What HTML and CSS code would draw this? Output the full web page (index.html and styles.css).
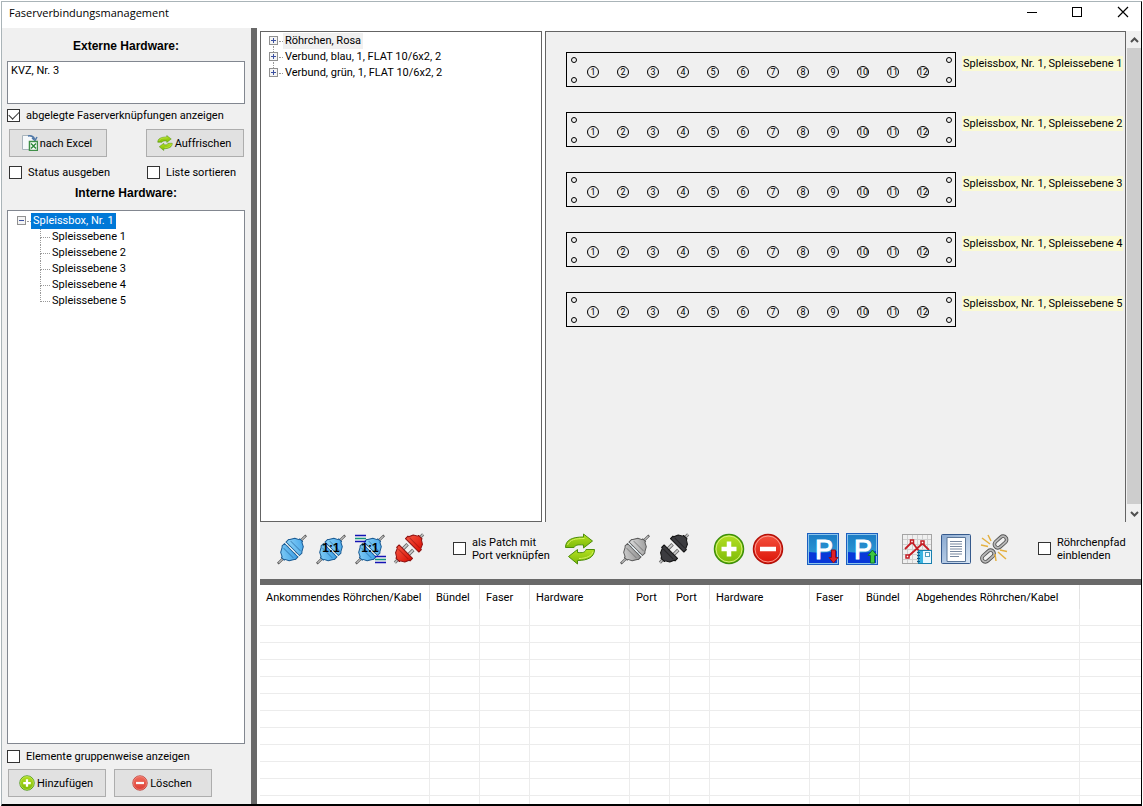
FILE: index.html
```html
<!DOCTYPE html>
<html lang="de">
<head>
<meta charset="utf-8">
<title>Faserverbindungsmanagement</title>
<link rel="stylesheet" href="styles.css">
</head>
<body>
<svg class="defs" aria-hidden="true">
  <defs>
    <linearGradient id="blue" x1="0" y1="0" x2="1" y2="1"><stop offset="0" stop-color="#8fd4f8"/><stop offset="1" stop-color="#3b9fe6"/></linearGradient>
    <linearGradient id="grey" x1="0" y1="0" x2="1" y2="1"><stop offset="0" stop-color="#dcdcdc"/><stop offset="1" stop-color="#909090"/></linearGradient>
    <linearGradient id="green" x1="0" y1="0" x2="0" y2="1"><stop offset="0" stop-color="#b4e022"/><stop offset="1" stop-color="#7cba08"/></linearGradient>
    <linearGradient id="red" x1="0" y1="0" x2="0" y2="1"><stop offset="0" stop-color="#f4523e"/><stop offset="1" stop-color="#dc1408"/></linearGradient>
    <linearGradient id="sky" x1="0" y1="0" x2="0" y2="1"><stop offset="0" stop-color="#1c7cc4"/><stop offset="1" stop-color="#35a4dc"/></linearGradient>
    <linearGradient id="steel" x1="0" y1="0" x2="1" y2="1"><stop offset="0" stop-color="#88a8d0"/><stop offset="1" stop-color="#dbe8f6"/></linearGradient>
    <symbol id="plug-closed" viewBox="0 0 32 32">
      <g transform="translate(16 16.500) rotate(-45)" stroke-linejoin="round">
        <path d="M-20 0H-11M11 0H20" stroke="#555" stroke-width="2.400"/>
        <path d="M-19 0H-11M11 0H19" stroke="#ccc" stroke-width="1"/>
        <path d="M-2-5H2M-2 5H2" stroke="#777" stroke-width="2.500"/>
        <path d="M-13-2H-12L-10-6-5.500-8.500-4.500-9.500H-1V9.500H-4.500L-5.500 8.500-10 6-12 2H-13Z" class="shell"/>
        <path d="M13-2H12L10-6 5.500-8.500 4.500-9.500H1V9.500H4.500L5.500 8.500 10 6 12 2H13Z" class="shell"/>
        <path d="M-5-7V7M5-7V7" class="seam"/>
        <path d="M0-9V9" stroke="#e8f4fa" stroke-width="1"/>
      </g>
    </symbol>
    <symbol id="plug-open" viewBox="0 0 32 32">
      <g transform="translate(16 15.500) rotate(-45)" stroke-linejoin="round">
        <path d="M-20 0H-15M15 0H20" stroke="#777" stroke-width="3"/>
        <path d="M-20 0H-15M15 0H20" stroke="#ccc" stroke-width="1"/>
        <path d="M-5-4H2M-5 4H2" stroke="#666" stroke-width="3.500"/>
        <path d="M-5-4H1.500M-5 4H1.500" stroke="#ccc" stroke-width="1.800"/>
        <path d="M-16-2.500H-15L-12.500-6.500-8-8.500V-9.500H-4.500V9.500H-8V8.500L-12.500 6.500-15 2.500H-16Z" class="shell"/>
        <path d="M16-2.500H15L12.500-6.500 8-8.500V-9.500H4.500V9.500H8V8.500L12.500 6.500 15 2.500H16Z" class="shell"/>
        <path d="M-8-7V7M8-7V7" class="seam"/>
      </g>
    </symbol>
    <symbol id="recycle" viewBox="0 0 32 32">
      <path d="M1.500 14.500C1.500 7 8 4 19.500 4V1L28.500 8 19.500 15V12C14 11.500 11.500 12 10 14.500Z" fill="url(#green)" stroke="#4d8e0a" stroke-linejoin="round"/>
      <path d="M30.500 16.500C30.500 24 24 27.500 13.500 27.500V31L4.500 23.500 13.500 16.500V19.500C19 20 21 19.500 22 16.500Z" fill="url(#green)" stroke="#4d8e0a" stroke-linejoin="round"/>
      <path d="M3.500 12C6 6.500 11 5.500 20.500 5.500M29 18.500C28 23 22 25.500 15 25.500" fill="none" stroke="#d4f060"/>
    </symbol>
    <symbol id="plus" viewBox="0 0 32 32">
      <circle cx="16" cy="16" r="14.500" fill="url(#green)" stroke="#3d900c" stroke-width="1.500"/>
      <circle cx="16" cy="16" r="13" fill="none" stroke="#d6f27a"/>
      <path d="M16 8.500V23.500M8.500 16H23.500" stroke="#fff" stroke-width="4.500"/>
    </symbol>
    <symbol id="minus" viewBox="0 0 32 32">
      <circle cx="16" cy="16" r="14.500" fill="url(#red)" stroke="#b41008" stroke-width="1.500"/>
      <circle cx="16" cy="16" r="13" fill="none" stroke="#fa9a90"/>
      <path d="M8 16H24" stroke="#fff" stroke-width="4.500"/>
    </symbol>
    <symbol id="park" viewBox="0 0 32 32">
      <rect width="32" height="32" fill="#1b5fc0"/>
      <rect x="1.500" y="1.500" width="29" height="29" fill="url(#sky)" stroke="#8cc4ec"/>
      <path d="M2 19Q16 21 30 18V30H2Z" fill="#0838d8"/>
    </symbol>
    <symbol id="link" viewBox="0 0 18 12">
      <rect x="2" y="2.500" width="14" height="7" rx="3.500" fill="none" stroke="#555" stroke-width="3.600"/>
      <rect x="2" y="2.500" width="14" height="7" rx="3.500" fill="none" stroke="#b8b8b8" stroke-width="1.800"/>
    </symbol>
  </defs>
</svg>

<div class="window">
  <header class="titlebar">
    <h1 class="caption">Faserverbindungsmanagement</h1>
    <div class="controls">
      <button class="control" aria-label="Minimieren"><svg width="12" height="12"><path d="M1 6.500H11" stroke="#000"/></svg></button>
      <button class="control" aria-label="Maximieren"><svg width="12" height="12"><rect x="1.500" y="1.500" width="9" height="9" fill="none" stroke="#000"/></svg></button>
      <button class="control" aria-label="Schließen"><svg width="12" height="12"><path d="M1 1L11 11M11 1L1 11" stroke="#000" stroke-width="1.200"/></svg></button>
    </div>
  </header>

  <div class="content">
    <aside class="sidebar">
      <h2 class="heading"><label for="external">Externe Hardware:</label></h2>
      <textarea class="external" id="external">KVZ, Nr. 3</textarea>
      <label class="check"><input type="checkbox" checked>abgelegte Faserverknüpfungen anzeigen</label>
      <div class="pair">
        <button class="button"><svg width="16" height="16"><path d="M.5.500H8L12.500 4V14.500H.500Z" fill="#f6f9fb" stroke="#a8b4bc"/><path d="M6 1Q11 0 12.500 4M10 3L13 5.500 15 2" fill="none" stroke="#5078a8" stroke-width="1.500"/><rect x="7.500" y="6.500" width="8" height="9" fill="#fff" stroke="#3f8f48" stroke-width="1.500"/><path d="M9 8.500L14 13.500M14 8.500L9 13.500" stroke="#2e8a3c" stroke-width="1.500"/></svg>nach Excel</button>
        <button class="button"><svg width="16" height="16"><use href="#recycle"/></svg>Auffrischen</button>
      </div>
      <div class="pair pair-checks">
        <label class="check"><input type="checkbox">Status ausgeben</label>
        <label class="check check-sort"><input type="checkbox">Liste sortieren</label>
      </div>
      <h2 class="heading heading-internal">Interne Hardware:</h2>
      <div class="internal">
        <ul class="tree">
          <li><button class="toggle" aria-label="Zuklappen"></button><span class="node selected">Spleissbox, Nr. 1</span>
            <ul class="branch">
              <li>Spleissebene 1</li>
              <li>Spleissebene 2</li>
              <li>Spleissebene 3</li>
              <li>Spleissebene 4</li>
              <li>Spleissebene 5</li>
            </ul>
          </li>
        </ul>
      </div>
      <label class="check check-group"><input type="checkbox">Elemente gruppenweise anzeigen</label>
      <div class="actions">
        <button class="button"><svg width="16" height="16"><use href="#plus"/></svg>Hinzufügen</button>
        <button class="button"><svg class="soft" width="16" height="16"><use href="#minus"/></svg>Löschen</button>
      </div>
    </aside>

    <main class="main">
      <section class="upper">
        <div class="cables">
          <ul class="tree tree-cables">
            <li><button class="toggle closed" aria-label="Aufklappen"></button><span class="node inactive">Röhrchen, Rosa</span></li>
            <li><button class="toggle closed" aria-label="Aufklappen"></button><span class="node">Verbund, blau, 1, FLAT 10/6x2, 2</span></li>
            <li><button class="toggle closed" aria-label="Aufklappen"></button><span class="node">Verbund, grün, 1, FLAT 10/6x2, 2</span></li>
          </ul>
        </div>
        <div class="trays">
          <div class="row"><div class="tray"><div class="holes"><i></i><i></i></div><div class="ports"><b>1</b><b>2</b><b>3</b><b>4</b><b>5</b><b>6</b><b>7</b><b>8</b><b>9</b><b>10</b><b>11</b><b>12</b></div><div class="holes"><i></i><i></i></div></div><span class="tag">Spleissbox, Nr. 1, Spleissebene 1</span></div>
          <div class="row"><div class="tray"><div class="holes"><i></i><i></i></div><div class="ports"><b>1</b><b>2</b><b>3</b><b>4</b><b>5</b><b>6</b><b>7</b><b>8</b><b>9</b><b>10</b><b>11</b><b>12</b></div><div class="holes"><i></i><i></i></div></div><span class="tag">Spleissbox, Nr. 1, Spleissebene 2</span></div>
          <div class="row"><div class="tray"><div class="holes"><i></i><i></i></div><div class="ports"><b>1</b><b>2</b><b>3</b><b>4</b><b>5</b><b>6</b><b>7</b><b>8</b><b>9</b><b>10</b><b>11</b><b>12</b></div><div class="holes"><i></i><i></i></div></div><span class="tag">Spleissbox, Nr. 1, Spleissebene 3</span></div>
          <div class="row"><div class="tray"><div class="holes"><i></i><i></i></div><div class="ports"><b>1</b><b>2</b><b>3</b><b>4</b><b>5</b><b>6</b><b>7</b><b>8</b><b>9</b><b>10</b><b>11</b><b>12</b></div><div class="holes"><i></i><i></i></div></div><span class="tag">Spleissbox, Nr. 1, Spleissebene 4</span></div>
          <div class="row"><div class="tray"><div class="holes"><i></i><i></i></div><div class="ports"><b>1</b><b>2</b><b>3</b><b>4</b><b>5</b><b>6</b><b>7</b><b>8</b><b>9</b><b>10</b><b>11</b><b>12</b></div><div class="holes"><i></i><i></i></div></div><span class="tag">Spleissbox, Nr. 1, Spleissebene 5</span></div>
        </div>
        <div class="scrollbar">
          <button class="arrow" aria-label="Nach oben"><svg width="9" height="8"><path d="M1 6L4.500 2.500 8 6" fill="none" stroke="#505050" stroke-width="2"/></svg></button>
          <div class="thumb"></div>
          <button class="arrow" aria-label="Nach unten"><svg width="9" height="8"><path d="M1 2L4.500 5.500 8 2" fill="none" stroke="#505050" stroke-width="2"/></svg></button>
        </div>
      </section>

      <section class="toolbar">
        <div class="group">
          <button class="tool plug-blue" aria-label="Verbinden"><svg width="32" height="32"><use href="#plug-closed"/></svg></button>
          <button class="tool plug-blue" aria-label="1:1 verbinden"><svg width="32" height="32"><use href="#plug-closed"/><text x="16" y="19" class="ratio">1:1</text></svg></button>
          <button class="tool plug-blue" aria-label="Bündel 1:1 verbinden"><svg width="32" height="32"><use href="#plug-closed"/><path d="M1 2.500H12M21 23.500H32M1 8.500H12M21 29.500H32" stroke="#1414b4" stroke-width="1.500"/><path d="M1 5.500H12M21 26.500H32" stroke="#14987c" stroke-width="1.500"/><text x="16" y="19" class="ratio">1:1</text></svg></button>
          <button class="tool plug-red" aria-label="Trennen"><svg width="32" height="32"><use href="#plug-open"/></svg></button>
        </div>
        <label class="check check-tool check-patch"><input type="checkbox"><span>als Patch mit<br>Port verknüpfen</span></label>
        <div class="group group-refresh">
          <button class="tool" aria-label="Tauschen"><svg width="32" height="32"><use href="#recycle"/></svg></button>
        </div>
        <div class="group">
          <button class="tool plug-grey" aria-label="Stecker verbinden"><svg width="32" height="32"><use href="#plug-closed"/></svg></button>
          <button class="tool plug-dark" aria-label="Stecker trennen"><svg width="32" height="32"><use href="#plug-open"/></svg></button>
        </div>
        <div class="group">
          <button class="tool" aria-label="Hinzufügen"><svg width="32" height="32"><use href="#plus"/></svg></button>
          <button class="tool" aria-label="Entfernen"><svg width="32" height="32"><use href="#minus"/></svg></button>
        </div>
        <div class="group">
          <button class="tool" aria-label="Parken"><svg width="32" height="32"><use href="#park"/><text x="17" y="26" class="letter">P</text><path d="M24.500 17H28.500V24.500H31L26.500 30 22 24.500H24.500Z" fill="#e02028" stroke="#8a1020"/></svg></button>
          <button class="tool" aria-label="Ausparken"><svg width="32" height="32"><use href="#park"/><text x="17" y="26" class="letter">P</text><path d="M24.500 30H28.500V22.500H31L26.500 17 22 22.500H24.500Z" fill="#3cc840" stroke="#0c7030"/></svg></button>
        </div>
        <div class="group">
          <button class="tool" aria-label="Messprotokoll"><svg width="32" height="32"><rect x="1.500" y="1.500" width="29" height="29" fill="#f0f0f0" stroke="#a4a4a4"/><path d="M6.500 2V30M11.500 2V30M16.500 2V30M21.500 2V30M26.500 2V30M2 6.500H30M2 11.500H30M2 16.500H30M2 21.500H30M2 26.500H30" stroke="#cfcfcf"/><path d="M4 16L11 9 18 18M6.500 24L21.500 10.500 28 17" fill="none" stroke="#c41c24" stroke-width="1.800"/><g fill="#fff" stroke="#c41c24" stroke-width="1.500"><rect x="9.500" y="7" width="3" height="3"/><rect x="20" y="8" width="3" height="3"/><rect x="5" y="22" width="3" height="3"/></g><rect x="17.500" y="17.500" width="13" height="13" fill="#e8f8ff" stroke="#187fae"/><rect x="18" y="18" width="4" height="12" fill="#38b4e0"/><path d="M16 19.500H19M16 22.500H19M16 25.500H19M16 28.500H19" stroke="#105c84"/><rect x="24.500" y="19.500" width="4" height="4" fill="#fff" stroke="#4c9cbc"/></svg></button>
          <button class="tool" aria-label="Bericht"><svg width="32" height="32"><rect x="1.500" y="1.500" width="29" height="29" rx="1" fill="url(#steel)" stroke="#35598c"/><path d="M7 4.500H25.500V28.500H7Z" fill="#fff" stroke="#5b7698"/><path d="M10 8.500H22M10 11H22M10 13.500H22M10 16H22M10 18.500H22M10 21H22M10 23.500H19" stroke="#7888a0"/></svg></button>
          <button class="tool" aria-label="Verkettung lösen"><svg width="32" height="32"><g transform="translate(21.500 9) rotate(-42)"><use href="#link" x="-9" y="-6" width="18" height="12"/></g><g transform="translate(9 23) rotate(-42)"><use href="#link" x="-9" y="-6" width="18" height="12"/></g><path d="M3 5L11 11M9 2L12 8M2 12L9 13.500M16 21L17 28M19 19L27 26M21 17L28 18.500" stroke="#e4b040" stroke-width="1.500"/></svg></button>
        </div>
        <label class="check check-tool check-path"><input type="checkbox"><span>Röhrchenpfad<br>einblenden</span></label>
      </section>

      <section class="connections">
        <table class="grid">
          <colgroup><col class="w170"><col class="w50"><col class="w50"><col class="w100"><col class="w40"><col class="w40"><col class="w100"><col class="w50"><col class="w50"><col class="w170"><col></colgroup>
          <thead>
            <tr><th>Ankommendes Röhrchen/Kabel</th><th>Bündel</th><th>Faser</th><th>Hardware</th><th>Port</th><th>Port</th><th>Hardware</th><th>Faser</th><th>Bündel</th><th>Abgehendes Röhrchen/Kabel</th><th></th></tr>
          </thead>
          <tbody>
            <tr><td></td><td></td><td></td><td></td><td></td><td></td><td></td><td></td><td></td><td></td><td></td></tr>
            <tr><td></td><td></td><td></td><td></td><td></td><td></td><td></td><td></td><td></td><td></td><td></td></tr>
            <tr><td></td><td></td><td></td><td></td><td></td><td></td><td></td><td></td><td></td><td></td><td></td></tr>
            <tr><td></td><td></td><td></td><td></td><td></td><td></td><td></td><td></td><td></td><td></td><td></td></tr>
            <tr><td></td><td></td><td></td><td></td><td></td><td></td><td></td><td></td><td></td><td></td><td></td></tr>
            <tr><td></td><td></td><td></td><td></td><td></td><td></td><td></td><td></td><td></td><td></td><td></td></tr>
            <tr><td></td><td></td><td></td><td></td><td></td><td></td><td></td><td></td><td></td><td></td><td></td></tr>
            <tr><td></td><td></td><td></td><td></td><td></td><td></td><td></td><td></td><td></td><td></td><td></td></tr>
            <tr><td></td><td></td><td></td><td></td><td></td><td></td><td></td><td></td><td></td><td></td><td></td></tr>
            <tr><td></td><td></td><td></td><td></td><td></td><td></td><td></td><td></td><td></td><td></td><td></td></tr>
            <tr><td></td><td></td><td></td><td></td><td></td><td></td><td></td><td></td><td></td><td></td><td></td></tr>
            <tr><td></td><td></td><td></td><td></td><td></td><td></td><td></td><td></td><td></td><td></td><td></td></tr>
          </tbody>
        </table>
      </section>
    </main>
  </div>
</div>
</body>
</html>
```

FILE: styles.css
```css
* { box-sizing: border-box; }

body {
  margin: 0;
  height: 100vh;
  padding: 1px 1px 0;
  background: #fff;
  color: #000;
  font: 11px/13px Roboto, "Liberation Sans", Arial, sans-serif;
}

ul { list-style: none; margin: 0; padding: 0; }
button { font: inherit; color: inherit; padding: 0; }
.defs { position: absolute; width: 0; height: 0; }

.window {
  display: flex;
  flex-direction: column;
  height: 100%;
  border: 1px solid #aab4b8;
  border-right-color: #000;
  border-bottom: 2px solid #000;
}

/* Title bar */
.titlebar {
  display: flex;
  flex: none;
  justify-content: space-between;
  height: 26px;
  padding-left: 7px;
}
.caption { margin: 0; font: 11px/22px "Open Sans", "Noto Sans", sans-serif; }
.controls { display: flex; }
.control {
  display: flex;
  align-items: center;
  justify-content: center;
  width: 45px;
  height: 20px;
  border: 0;
  background: none;
}
.control:last-child { width: 42px; padding-left: 6px; }

.content { display: flex; flex: 1; min-height: 0; }

/* Left column */
.sidebar {
  display: flex;
  flex: none;
  flex-direction: column;
  width: 255px;
  padding: 12px 6px 7px 5px;
  border-right: 6px solid #696969;
  background: #f0f0f0;
}
.heading {
  margin: 0 0 8px;
  font: bold 12px/13px "Liberation Sans", Arial, sans-serif;
  text-align: center;
}
.heading-internal { margin: 8px 0 10px; }
.external {
  flex: none;
  height: 43px;
  margin: 0;
  padding: 2px 3px;
  border: 1px solid #828790;
  background: #fff;
  color: #000;
  font: inherit;
  resize: none;
}
.check { display: flex; align-items: center; gap: 6px; white-space: nowrap; }
.external + .check { margin-top: 5px; }
.check input {
  display: grid;
  flex: none;
  place-items: center;
  appearance: none;
  width: 13px;
  height: 13px;
  margin: 0;
  border: 1px solid #333;
  background: #fff;
}
.check input:checked::before {
  content: "";
  width: 9px;
  height: 5px;
  border: solid #333;
  border-width: 0 0 1px 1px;
  transform: translateY(-2px) rotate(-45deg);
}
.pair { display: flex; justify-content: space-between; margin: 7px 1px 0 2px; }
.pair-checks { display: grid; grid-template-columns: 138px 1fr; margin-top: 9px; }
.button {
  display: flex;
  align-items: center;
  justify-content: center;
  gap: 2px;
  width: 98px;
  height: 28px;
  padding-right: 2px;
  border: 1px solid #adadad;
  background: #e1e1e1;
}
.soft { opacity: .8; }
.internal {
  flex: 1;
  min-height: 0;
  padding: 2px 9px;
  border: 1px solid #828790;
  background: #fff;
}
.check-group { margin-top: 6px; }
.actions { display: flex; gap: 8px; margin: 6px 1px 0; }

/* Trees */
.tree li { position: relative; line-height: 16px; white-space: nowrap; }
.tree-cables li:not(:last-child)::after {
  content: "";
  position: absolute;
  top: 13px;
  left: 4px;
  height: 6px;
  border-left: 1px dotted #999;
}
.toggle {
  display: inline-block;
  width: 9px;
  height: 9px;
  margin: 3px 5px 4px 0;
  border: 1px solid #919191;
  background:
    linear-gradient(#3c50a0, #3c50a0) center / 5px 1px no-repeat,
    #f4f4f4;
  vertical-align: top;
}
.toggle.closed {
  background:
    linear-gradient(#3c50a0, #3c50a0) center / 5px 1px no-repeat,
    linear-gradient(#3c50a0, #3c50a0) center / 1px 5px no-repeat,
    #f4f4f4;
}
.toggle + .node::before {
  content: "";
  position: absolute;
  top: 8px;
  left: 10px;
  width: 4px;
  border-top: 1px dotted #999;
}
.node { display: inline-block; padding: 0 2px; vertical-align: top; }
.selected { background: #0078d7; color: #fff; }
.inactive { background: #f0f0f0; }
.branch { margin-left: 23px; }
.branch li { padding-left: 12px; }
.branch li::before {
  content: "";
  position: absolute;
  top: 0;
  left: 0;
  width: 9px;
  height: 8px;
  border: dotted #999;
  border-width: 0 0 1px 1px;
}
.branch li:not(:last-child)::after {
  content: "";
  position: absolute;
  top: 8px;
  left: 0;
  height: 8px;
  border-left: 1px dotted #999;
}

/* Right side */
.main { display: flex; flex: 1; flex-direction: column; min-width: 0; padding-left: 3px; }
.upper { display: flex; flex: 1; min-height: 0; padding-top: 3px; }
.cables {
  flex: none;
  width: 282px;
  margin-right: 3px;
  padding: 1px 8px;
  border: 1px solid #646464;
}
.trays {
  display: flex;
  flex: 1;
  flex-direction: column;
  gap: 25px;
  min-width: 0;
  padding: 20px 0 0 20px;
  overflow: hidden;
  border: 1px solid #646464;
  border-bottom: 0;
  background: #f0f0f0;
}
.row { display: flex; align-items: flex-start; }
.tray {
  display: flex;
  flex: none;
  width: 390px;
  height: 35px;
  border: 1px solid #000;
}
.holes { display: flex; flex-direction: column; justify-content: space-between; padding: 4px 3px 3px 0; }
.holes:first-child { padding: 4px 1px 3px 4px; }
.holes i { width: 6px; height: 6px; border: 1px solid #000; border-radius: 50%; }
.ports { display: flex; flex: 1; padding-top: 13px; }
.ports b {
  display: flex;
  justify-content: center;
  width: 12px;
  height: 12px;
  margin: 0 9px;
  border: 1px solid #000;
  border-radius: 50%;
  font-size: 9px;
  font-weight: normal;
  line-height: 10px;
}
.tag { margin: 4px 0 0 6px; padding: 0 1px; background: #fafad2; line-height: 15px; white-space: nowrap; }

.scrollbar { display: flex; flex: none; flex-direction: column; width: 15px; padding-left: 1px; background: #f0f0f0; }
.arrow { display: flex; align-items: center; justify-content: center; height: 17px; border: 0; background: none; }
.thumb { flex: 1; margin-bottom: 1px; background: #cdcdcd; }

/* Toolbar */
.toolbar {
  display: flex;
  flex: none;
  align-items: center;
  gap: 23px;
  height: 63px;
  padding: 0 16px 4px;
  border-bottom: 6px solid #696969;
  background: #f0f0f0;
}
.group { display: flex; gap: 7px; }
.tool { display: block; width: 32px; height: 32px; border: 0; background: none; }
.tool svg { display: block; }
.check-patch { width: 95px; margin-left: 5px; }
.group-refresh { margin-left: -7px; }
.check-path { margin-left: 4px; }

.plug-blue { --fill: url(#blue); --line: #1c5c94; }
.plug-red { --fill: url(#red); --line: #8c1010; }
.plug-grey { --fill: url(#grey); --line: #5c5c5c; }
.plug-dark { --fill: #3c3c40; --line: #101010; }
.shell { fill: var(--fill); stroke: var(--line); stroke-width: 1px; }
.seam { fill: none; stroke: var(--line); stroke-width: 1px; opacity: .5; }
.ratio { font: bold 12px "Liberation Sans", Arial, sans-serif; text-anchor: middle; }
.letter { fill: #fff; stroke: #fff; stroke-width: 1px; font: 27px "Liberation Sans", Arial, sans-serif; text-anchor: middle; }

/* Connection list */
.connections { flex: none; height: 219px; overflow: hidden; background: #fff; }
.grid { width: 100%; table-layout: fixed; border-collapse: separate; border-spacing: 0; }
.grid th {
  height: 24px;
  padding: 0 0 0 6px;
  border-right: 1px solid #e2e2e2;
  font-weight: normal;
  text-align: left;
  white-space: nowrap;
}
.grid td { height: 17px; padding: 0; border-right: 1px solid #ececec; border-bottom: 1px solid #ececec; }
.grid th:last-child, .grid td:last-child { border-right: 0; }
.w170 { width: 170px; }
.w100 { width: 100px; }
.w50 { width: 50px; }
.w40 { width: 40px; }
```
